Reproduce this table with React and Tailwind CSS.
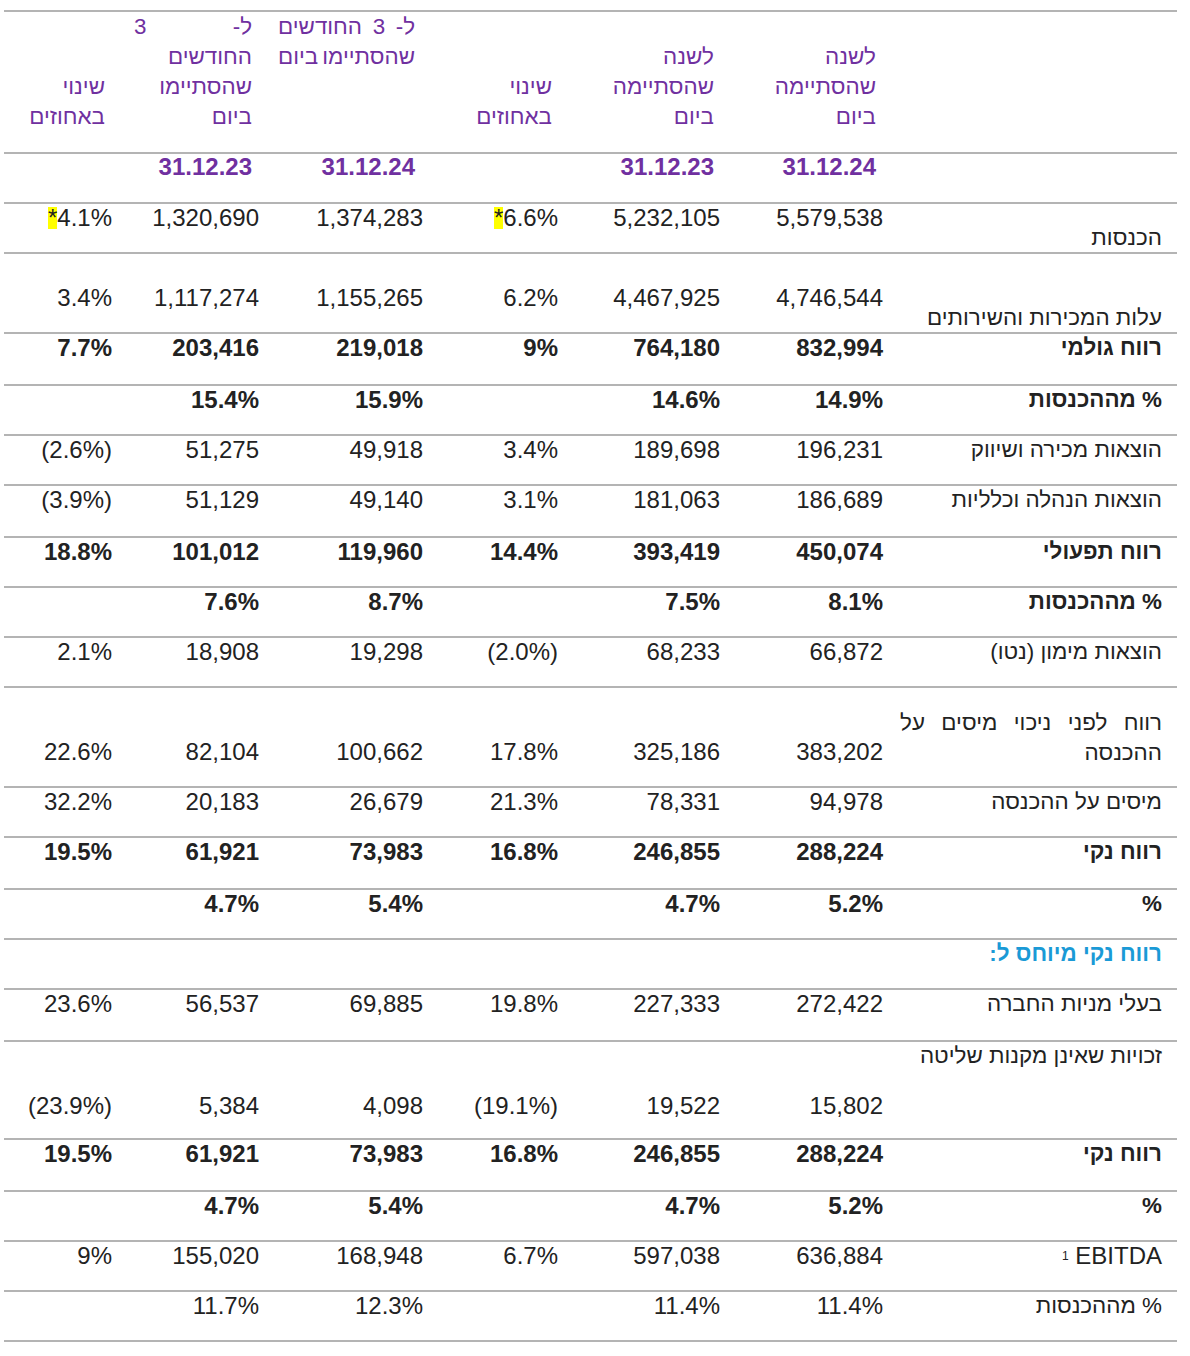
import React from "react";

const GRID = "grid grid-cols-[114px_147px_164px_135px_162px_163px_288px]";
const LINE = "border-b-2 border-[#b4b4b4]";

const rows = [
  { label: "הכנסות", h: "h-[50px]", labelPt: "pt-[20px]", v: ["5,579,538", "5,232,105", "*6.6%", "1,374,283", "1,320,690", "*4.1%"] },
  { label: "עלות המכירות והשירותים", h: "h-[80px]", labelPt: "pt-[50px]", numPt: "pt-[30px]", v: ["4,746,544", "4,467,925", "6.2%", "1,155,265", "1,117,274", "3.4%"] },
  { label: "רווח גולמי", bold: true, h: "h-[52px]", v: ["832,994", "764,180", "9%", "219,018", "203,416", "7.7%"] },
  { label: "% מההכנסות", bold: true, h: "h-[50px]", v: ["14.9%", "14.6%", "", "15.9%", "15.4%", ""] },
  { label: "הוצאות מכירה ושיווק", h: "h-[50px]", v: ["196,231", "189,698", "3.4%", "49,918", "51,275", "(2.6%)"] },
  { label: "הוצאות הנהלה וכלליות", h: "h-[52px]", v: ["186,689", "181,063", "3.1%", "49,140", "51,129", "(3.9%)"] },
  { label: "רווח תפעולי", bold: true, h: "h-[50px]", v: ["450,074", "393,419", "14.4%", "119,960", "101,012", "18.8%"] },
  { label: "% מההכנסות", bold: true, h: "h-[50px]", v: ["8.1%", "7.5%", "", "8.7%", "7.6%", ""] },
  { label: "הוצאות מימון (נטו)", h: "h-[50px]", v: ["66,872", "68,233", "(2.0%)", "19,298", "18,908", "2.1%"] },
  { label: "pretax", h: "h-[100px]", numPt: "pt-[50px]", v: ["383,202", "325,186", "17.8%", "100,662", "82,104", "22.6%"] },
  { label: "מיסים על ההכנסה", h: "h-[50px]", v: ["94,978", "78,331", "21.3%", "26,679", "20,183", "32.2%"] },
  { label: "רווח נקי", bold: true, h: "h-[52px]", v: ["288,224", "246,855", "16.8%", "73,983", "61,921", "19.5%"] },
  { label: "%", bold: true, h: "h-[50px]", v: ["5.2%", "4.7%", "", "5.4%", "4.7%", ""] },
  { label: "רווח נקי מיוחס ל:", blue: true, h: "h-[50px]", v: ["", "", "", "", "", ""] },
  { label: "בעלי מניות החברה", h: "h-[52px]", v: ["272,422", "227,333", "19.8%", "69,885", "56,537", "23.6%"] },
  { label: "זכויות שאינן מקנות שליטה", h: "h-[98px]", numPt: "pt-[50px]", v: ["15,802", "19,522", "(19.1%)", "4,098", "5,384", "(23.9%)"] },
  { label: "רווח נקי", bold: true, h: "h-[52px]", v: ["288,224", "246,855", "16.8%", "73,983", "61,921", "19.5%"] },
  { label: "%", bold: true, h: "h-[50px]", v: ["5.2%", "4.7%", "", "5.4%", "4.7%", ""] },
  { label: "ebitda", h: "h-[50px]", v: ["636,884", "597,038", "6.7%", "168,948", "155,020", "9%"] },
  { label: "% מההכנסות", h: "h-[50px]", v: ["11.4%", "11.4%", "", "12.3%", "11.7%", ""] },
];

function Num({ text }) {
  if (text.startsWith("*")) {
    return (
      <span>
        <span className="bg-[#ffff00] leading-[22px] inline-block">*</span>
        {text.slice(1)}
      </span>
    );
  }
  return <span>{text}</span>;
}

function Label({ row }) {
  if (row.label === "pretax") {
    return (
      <div dir="rtl" className="pt-[20px] leading-[30px]">
        <div className="flex justify-between">
          <span>רווח</span>
          <span>לפני</span>
          <span>ניכוי</span>
          <span>מיסים</span>
          <span>על</span>
        </div>
        <div>ההכנסה</div>
      </div>
    );
  }
  if (row.label === "ebitda") {
    return (
      <div dir="ltr" className="text-right leading-[28px] text-[24px]">
        <sup className="text-[12px] relative -top-[4px]">1</sup> EBITDA
      </div>
    );
  }
  return (
    <div
      dir="rtl"
      className={`leading-[28px] ${row.labelPt || ""} ${row.bold || row.blue ? "font-bold" : ""} ${row.blue ? "text-[#1a9ad6]" : ""}`}
    >
      {row.label}
    </div>
  );
}

function DataRow({ row }) {
  const vals = [...row.v].reverse();
  return (
    <div className={`${GRID} ${LINE} ${row.h} box-border`}>
      {vals.map((t, i) => (
        <div key={i} className={`text-right pr-[6px] text-[24px] leading-[28px] ${row.numPt || ""} ${row.bold ? "font-bold" : ""}`}>
          <Num text={t} />
        </div>
      ))}
      <div className="pl-[11px] pr-[15px]">
        <Label row={row} />
      </div>
    </div>
  );
}

export default function App() {
  return (
    <div className="w-[1190px] h-[1356px] bg-white pt-[10px] pl-[4px] text-[22.4px] text-[#222222] font-['Liberation_Sans',Arial,sans-serif]">
      <div className="w-[1173px] border-t-2 border-[#b4b4b4]">
        {/* header */}
        <div className={`${GRID} ${LINE} h-[142px] box-border items-end pb-[21px] leading-[30px] text-[#7030a0]`} dir="ltr">
          <div dir="rtl" className="pr-[13px] text-right">
            <div>שינוי</div>
            <div>באחוזים</div>
          </div>
          <div dir="rtl" className="pr-[13px] text-right">
            <div className="flex justify-between w-[118px]">
              <span>ל-</span>
              <span>3</span>
            </div>
            <div>החודשים</div>
            <div>שהסתיימו</div>
            <div>ביום</div>
          </div>
          <div dir="rtl" className="pr-[14px] text-right self-start">
            <div className="w-[137px] whitespace-nowrap">
              <div className="flex justify-between">
                <span>ל-</span>
                <span>3</span>
                <span>החודשים</span>
              </div>
              <div className="flex justify-between">
                <span>שהסתיימו</span>
                <span>ביום</span>
              </div>
            </div>
          </div>
          <div dir="rtl" className="pr-[12px] text-right">
            <div>שינוי</div>
            <div>באחוזים</div>
          </div>
          <div dir="rtl" className="pr-[12px] text-right">
            <div>לשנה</div>
            <div>שהסתיימה</div>
            <div>ביום</div>
          </div>
          <div dir="rtl" className="pr-[13px] text-right">
            <div>לשנה</div>
            <div>שהסתיימה</div>
            <div>ביום</div>
          </div>
          <div />
        </div>

        {/* dates */}
        <div className={`${GRID} ${LINE} h-[50px] box-border font-bold text-[24px] text-[#7030a0] leading-[26px]`}>
          <div />
          <div className="text-right pr-[13px]">31.12.23</div>
          <div className="text-right pr-[14px]">31.12.24</div>
          <div />
          <div className="text-right pr-[12px]">31.12.23</div>
          <div className="text-right pr-[13px]">31.12.24</div>
          <div />
        </div>

        {rows.map((r, i) => (
          <DataRow key={i} row={r} />
        ))}
      </div>
    </div>
  );
}
